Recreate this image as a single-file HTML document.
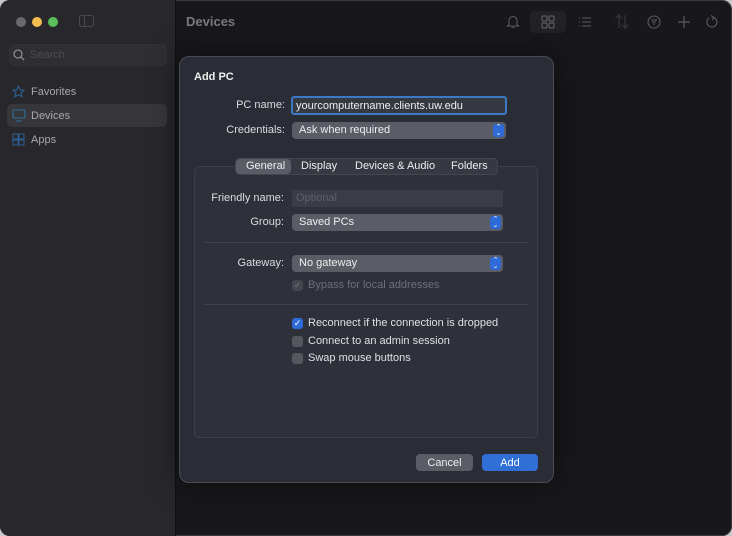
<!DOCTYPE html>
<html><head><meta charset="utf-8"><style>
*{box-sizing:border-box;margin:0;padding:0}
body{width:732px;height:536px;background:#c8c8c8;font-family:"Liberation Sans",sans-serif;font-size:11px;color:#e6e6e8;position:relative;overflow:hidden}
.win{position:absolute;left:0;top:0;width:732px;height:536px;border-radius:10px;background:#18181c;overflow:hidden;box-shadow:inset 0 0 0 1px #3a3a3e}
.side{position:absolute;left:0;top:0;width:176px;height:536px;background:#28282c;border-right:1px solid #111}
.abs{position:absolute}
.dot{position:absolute;top:17px;width:10px;height:10px;border-radius:50%}
.lbl{position:absolute;text-align:right;color:#dcdce0;font-size:11px}
.pop{position:absolute;height:17px;background:#5b5d66;border-radius:4px;padding:1px 7px;font-size:11px;color:#eee;line-height:15px}
.pop .st{position:absolute;right:2px;top:2px;width:11px;height:13px;background:#2f6bd8;border-radius:3px;color:#fff;font-size:7px;line-height:6px;text-align:center;padding-top:1px}
.cb{position:absolute;width:11px;height:11px;border-radius:3px;background:#55575f}
.cbt{position:absolute;font-size:11px;color:#e0e0e4}
.sep{position:absolute;left:204px;width:324px;height:1px;background:#3e404a}
</style></head><body>
<div class="win">
<div class="side">
<div class="dot" style="left:16px;background:#6a6a6e"></div>
<div class="dot" style="left:32px;background:#f4be4f"></div>
<div class="dot" style="left:48px;background:#5ac05a"></div>
<div class="abs" style="left:79px;top:15px;width:15px;height:12px;border:1px solid #4a4a4e;border-radius:3px"><div style="width:5px;height:10px;border-right:1px solid #4a4a4e"></div></div>
<div class="abs" style="left:9px;top:44px;width:158px;height:22px;background:#2f2f33;border-radius:6px;border:1px solid #333337"></div>
<svg class="abs" style="left:13px;top:49px" width="12" height="12"><circle cx="5" cy="5" r="4" fill="none" stroke="#8a8a8e" stroke-width="1.3"/><path d="M8 8L11 11" stroke="#8a8a8e" stroke-width="1.3"/></svg>
<div class="abs" style="left:30px;top:49px;color:#4e4e52;font-size:11px">Search</div>
<svg class="abs" style="left:12px;top:85px" width="13" height="13"><path d="M6.5 1L8.2 4.8L12 5.2L9.1 7.8L10 11.8L6.5 9.7L3 11.8L3.9 7.8L1 5.2L4.8 4.8Z" fill="none" stroke="#2d5f94" stroke-width="1.1"/></svg>
<div class="abs" style="left:31px;top:86px;color:#a8a8ac">Favorites</div>
<div class="abs" style="left:7px;top:104px;width:160px;height:23px;background:#37373b;border-radius:5px"></div>
<svg class="abs" style="left:12px;top:109px" width="14" height="13"><rect x="1" y="1" width="12" height="8" rx="1.5" fill="none" stroke="#2d6f9c" stroke-width="1.1"/><path d="M4 12H10" stroke="#2d6f9c" stroke-width="1.1"/></svg>
<div class="abs" style="left:31px;top:110px;color:#a8a8ac">Devices</div>
<svg class="abs" style="left:12px;top:133px" width="13" height="13"><rect x="1" y="1" width="5" height="5" fill="none" stroke="#2d5f94"/><rect x="7" y="1" width="5" height="5" fill="none" stroke="#2d5f94"/><rect x="1" y="7" width="5" height="5" fill="none" stroke="#2d5f94"/><rect x="7" y="7" width="5" height="5" fill="none" stroke="#2d5f94"/></svg>
<div class="abs" style="left:31px;top:134px;color:#a8a8ac">Apps</div>
</div>
<div class="abs" style="left:186px;top:14px;font-size:13px;font-weight:bold;color:#7a7a7e">Devices</div>
<svg class="abs" style="left:506px;top:14px" width="14" height="15"><path d="M3 11V6.5A4 4 0 0 1 11 6.5V11L12.5 12H1.5Z M5.5 13.5H8.5" fill="none" stroke="#5a5a5e" stroke-width="1.1"/></svg>
<div class="abs" style="left:530px;top:11px;width:36px;height:22px;background:#222226;border-radius:5px"></div>
<svg class="abs" style="left:541px;top:15px" width="14" height="14"><rect x="1" y="1" width="5" height="5" rx="1" fill="none" stroke="#6a6a6e"/><rect x="8" y="1" width="5" height="5" rx="1" fill="none" stroke="#6a6a6e"/><rect x="1" y="8" width="5" height="5" rx="1" fill="none" stroke="#6a6a6e"/><rect x="8" y="8" width="5" height="5" rx="1" fill="none" stroke="#6a6a6e"/></svg>
<svg class="abs" style="left:578px;top:16px" width="14" height="12"><path d="M1 2H2M1 6H2M1 10H2M4 2H13M4 6H13M4 10H13" stroke="#5a5a5e" stroke-width="1.1"/></svg>
<svg class="abs" style="left:614px;top:14px" width="16" height="15"><path d="M5 14V1L1.5 4.5M5 1L8.5 4.5M11 1V14L7.5 10.5M11 14L14.5 10.5" fill="none" stroke="#3a3a3e" stroke-width="1.1"/></svg>
<svg class="abs" style="left:647px;top:15px" width="14" height="14"><circle cx="7" cy="7" r="6" fill="none" stroke="#5a5a5e" stroke-width="1.1"/><path d="M4 5H10M5 7H9M6 9H8" stroke="#5a5a5e"/></svg>
<svg class="abs" style="left:677px;top:15px" width="14" height="14"><path d="M7 1V13M1 7H13" stroke="#5a5a5e" stroke-width="1.3"/></svg>
<svg class="abs" style="left:705px;top:14px" width="14" height="15"><path d="M9 3.5A5 5 0 1 1 4 4" fill="none" stroke="#5a5a5e" stroke-width="1.1"/><path d="M6 1.5L9 3.5L7 6" fill="none" stroke="#5a5a5e" stroke-width="1.1"/></svg>

<div class="abs" style="left:179px;top:56px;width:375px;height:427px;background:#2a2c36;border:1px solid #4a4c56;border-radius:10px;box-shadow:0 0 30px rgba(0,0,0,.5)"></div>
<div class="abs" style="left:194px;top:71px;font-weight:bold;font-size:11px;color:#eee">Add PC</div>
<div class="lbl" style="left:190px;width:95px;top:99px">PC name:</div>
<div class="abs" style="left:291px;top:96px;width:216px;height:19px;border:2px solid #3d78c4;border-radius:3px;background:#363842;padding:1px 3px;line-height:14px;color:#eee">yourcomputername.clients.uw.edu</div>
<div class="lbl" style="left:190px;width:95px;top:124px">Credentials:</div>
<div class="pop" style="left:292px;top:122px;width:214px">Ask when required<div class="st">⌃<br>⌄</div></div>

<div class="abs" style="left:194px;top:166px;width:344px;height:272px;background:#2e303a;border:1px solid #3c3e48;border-radius:5px"></div>
<div class="abs" style="left:235px;top:158px;width:263px;height:17px;background:#363842;border:1px solid #444650;border-radius:5px"></div>
<div class="abs" style="left:236px;top:159px;width:55px;height:15px;background:#5b5d66;border-radius:4px"></div>
<div class="abs" style="left:246px;top:160px;color:#eee">General</div>
<div class="abs" style="left:301px;top:160px;color:#eee">Display</div>
<div class="abs" style="left:355px;top:160px;color:#eee">Devices &amp; Audio</div>
<div class="abs" style="left:451px;top:160px;color:#eee">Folders</div>

<div class="lbl" style="left:190px;width:94px;top:192px">Friendly name:</div>
<div class="abs" style="left:292px;top:190px;width:211px;height:17px;background:#3a3c46;padding:1px 4px;color:#5e606a;line-height:15px">Optional</div>
<div class="lbl" style="left:190px;width:94px;top:216px">Group:</div>
<div class="pop" style="left:292px;top:214px;width:211px">Saved PCs<div class="st">⌃<br>⌄</div></div>
<div class="sep" style="top:242px"></div>
<div class="lbl" style="left:190px;width:94px;top:257px">Gateway:</div>
<div class="pop" style="left:292px;top:255px;width:211px">No gateway<div class="st">⌃<br>⌄</div></div>
<div class="cb" style="left:292px;top:280px;background:#454750;color:#777;font-size:9px;line-height:11px;text-align:center">✓</div>
<div class="cbt" style="left:308px;top:279px;color:#6e7078">Bypass for local addresses</div>
<div class="sep" style="top:304px"></div>
<div class="cb" style="left:292px;top:318px;background:#2f6bd8;color:#fff;font-size:9px;line-height:11px;text-align:center">✓</div>
<div class="cbt" style="left:308px;top:317px">Reconnect if the connection is dropped</div>
<div class="cb" style="left:292px;top:336px"></div>
<div class="cbt" style="left:308px;top:335px">Connect to an admin session</div>
<div class="cb" style="left:292px;top:353px"></div>
<div class="cbt" style="left:308px;top:352px">Swap mouse buttons</div>

<div class="abs" style="left:416px;top:454px;width:57px;height:17px;background:#5b5d66;border-radius:4px;text-align:center;line-height:18px;color:#eee">Cancel</div>
<div class="abs" style="left:482px;top:454px;width:56px;height:17px;background:#2f6fd6;border-radius:4px;text-align:center;line-height:18px;color:#fff">Add</div>
</div>
</body></html>
